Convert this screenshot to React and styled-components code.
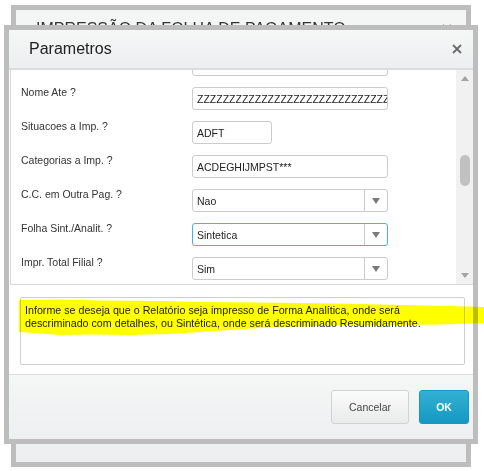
import styled, { createGlobalStyle } from 'styled-components';

const GlobalStyle = createGlobalStyle`
  html, body {
    margin: 0;
    padding: 0;
    background: #fff;
  }
  body {
    font-family: 'Liberation Sans', Arial, sans-serif;
    color: #333;
  }
`;

const Desk = styled.div`
  position: relative;
  width: 484px;
  height: 471px;
  overflow: hidden;
  background: #fff;
`;

// window that stays open behind the params dialog
const BackWindow = styled.div`
  position: absolute;
  left: 11px;
  top: 5px;
  width: 460px;
  height: 462px;
  box-sizing: border-box;
  border: 5px solid #bdbdbd;
  background: linear-gradient(#f4f5f5, #eeeff0);
`;

const BackHeader = styled.div`
  display: flex;
  justify-content: space-between;
  align-items: center;
  padding: 10px 14px 0 20px;
  font-size: 16px;
  line-height: 18px;
  color: #333;
`;

const Dialog = styled.div`
  position: absolute;
  left: 4px;
  top: 25px;
  width: 474px;
  height: 419px;
  box-sizing: border-box;
  border: 5px solid #bdbdbd;
  display: flex;
  flex-direction: column;
  background: #fff;
`;

const Header = styled.div`
  height: 38px;
  flex-shrink: 0;
  display: flex;
  align-items: center;
  justify-content: space-between;
  padding: 0 11px 0 20px;
  background: linear-gradient(#f6f7f7, #eceeef);
  border-bottom: 2px solid #dadcdd;
`;

const Title = styled.div`
  font-size: 16px;
  color: #222;
`;

const CloseIcon = styled.svg`
  width: 10px;
  height: 10px;
  display: block;
`;

const Body = styled.div`
  flex: 1;
  display: flex;
  flex-direction: column;
  background: #fff;
`;

const Panel = styled.div`
  height: 215px;
  margin-left: 1px;
  display: flex;
  border-left: 1px solid #d8d8d8;
  border-bottom: 1px solid #d8d8d8;
  box-sizing: border-box;
`;

const Rows = styled.div`
  flex: 1;
  overflow: hidden;
  padding-left: 10px;
`;

const RowsInner = styled.div`
  margin-top: ${p => p.$offset}px;
`;

const Row = styled.div`
  display: flex;
  height: 34px;
`;

const Label = styled.div`
  width: 171px;
  flex-shrink: 0;
  padding-top: 1px;
  font-size: 10.5px;
  line-height: 14px;
  color: #333;
`;

const Field = styled.div`
  margin-top: 3px;
  width: ${p => p.$width}px;
  height: 23px;
  box-sizing: border-box;
  border: 1px solid ${p => (p.$focused ? '#45b5d8' : '#cccccc')};
  border-radius: 3px;
  display: flex;
  align-items: center;
  overflow: hidden;
  background: #fff;
`;

const FieldText = styled.div`
  flex: 1;
  padding-left: 4px;
  font-size: 10.5px;
  color: #222;
  white-space: nowrap;
  overflow: hidden;
`;

const Caret = styled.div`
  width: 22px;
  height: 100%;
  border-left: 1px solid #cccccc;
  display: flex;
  align-items: center;
  justify-content: center;
  &::after {
    content: '';
    border-left: 4px solid transparent;
    border-right: 4px solid transparent;
    border-top: 6px solid #7a7a7a;
  }
`;

const ScrollBar = styled.div`
  width: 17px;
  flex-shrink: 0;
  background: #f1f1f1;
  display: flex;
  flex-direction: column;
`;

const ScrollArrow = styled.div`
  height: 17px;
  display: flex;
  align-items: center;
  justify-content: center;
  &::after {
    content: '';
    border-left: 4px solid transparent;
    border-right: 4px solid transparent;
    ${p => (p.$down ? 'border-top' : 'border-bottom')}: 5px solid #a3a3a3;
  }
`;

const Track = styled.div`
  flex: 1;
  display: flex;
  justify-content: center;
`;

const Thumb = styled.div`
  margin-top: 68px;
  width: 10px;
  height: 31px;
  border-radius: 5px;
  background: #c1c1c1;
`;

const Help = styled.div`
  margin: 12px 8px 0 11px;
  height: 68px;
  box-sizing: border-box;
  border: 1px solid #cfcfcf;
  border-radius: 2px;
  padding: 6px 4px;
  font-size: 10.7px;
  line-height: 13px;
  color: #222;
`;

const Footer = styled.div`
  height: 64px;
  flex-shrink: 0;
  display: flex;
  align-items: center;
  justify-content: flex-end;
  gap: 10px;
  padding-right: 4px;
  background: linear-gradient(#f5f6f6, #eeeff0);
  border-top: 1px solid #dcdcdc;
`;

const Button = styled.button`
  height: 34px;
  width: ${p => p.$width}px;
  border-radius: 3px;
  font-family: 'Liberation Sans', Arial, sans-serif;
  font-size: 10.5px;
  cursor: pointer;
  ${p =>
    p.$primary
      ? `
    border: 1px solid #1798c0;
    background: linear-gradient(#33b0d2, #1499c3);
    color: #fff;
    font-weight: bold;
  `
      : `
    border: 1px solid #d2d2d2;
    background: linear-gradient(#fbfbfb, #e9eaea);
    color: #444;
  `}
`;

const Marker = styled.svg`
  position: absolute;
  left: 0;
  top: 290px;
  width: 484px;
  height: 50px;
  mix-blend-mode: multiply;
  pointer-events: none;
`;

const params = [
  { label: 'Nome De ?', value: '', width: 196 },
  { label: 'Nome Ate ?', value: 'ZZZZZZZZZZZZZZZZZZZZZZZZZZZZZZ', width: 196 },
  { label: 'Situacoes a Imp. ?', value: 'ADFT', width: 80 },
  { label: 'Categorias a Imp. ?', value: 'ACDEGHIJMPST***', width: 196 },
  { label: 'C.C. em Outra Pag. ?', value: 'Nao', width: 196, select: true },
  { label: 'Folha Sint./Analit. ?', value: 'Sintetica', width: 196, select: true, focused: true },
  { label: 'Impr. Total Filial ?', value: 'Sim', width: 196, select: true },
];

const Close = ({ color = '#6b6b6b' }) => (
  <CloseIcon viewBox="0 0 10 10">
    <path d="M1 1L9 9M9 1L1 9" stroke={color} strokeWidth="1.8" />
  </CloseIcon>
);

const App = () => {
  return (
    <Desk>
      <GlobalStyle />
      <BackWindow>
        <BackHeader>
          <span>IMPRESSÃO DA FOLHA DE PAGAMENTO</span>
          <Close color="#777" />
        </BackHeader>
      </BackWindow>

      <Dialog>
        <Header>
          <Title>Parametros</Title>
          <Close />
        </Header>
        <Body>
          <Panel>
            <Rows>
              <RowsInner $offset={-20}>
                {params.map(p => (
                  <Row key={p.label}>
                    <Label>{p.label}</Label>
                    <Field $width={p.width} $focused={p.focused}>
                      <FieldText>{p.value}</FieldText>
                      {p.select && <Caret />}
                    </Field>
                  </Row>
                ))}
              </RowsInner>
            </Rows>
            <ScrollBar>
              <ScrollArrow />
              <Track>
                <Thumb />
              </Track>
              <ScrollArrow $down />
            </ScrollBar>
          </Panel>
          <Help>
            Informe se deseja que o Relatório seja impresso de Forma Analítica, onde será descriminado com
            detalhes, ou Sintética, onde será descriminado Resumidamente.
          </Help>
        </Body>
        <Footer>
          <Button $width={78}>Cancelar</Button>
          <Button $width={50} $primary>OK</Button>
        </Footer>
      </Dialog>

      <Marker viewBox="0 0 484 50">
        <path
          d="M19 10 L60 9.5 L100 10.5 L160 11 L200 12 L260 12.5 L300 13 L360 14 L400 15 L450 16 L484 17
             L484 33 L440 34.5 L400 35 L340 35.5 L300 36.5 L260 38 L230 40 L200 42 L170 44 L130 45
             L90 44.5 L60 45 L35 43 L19 42 Z"
          fill="#ffff00"
        />
      </Marker>
    </Desk>
  );
};

export default App;
